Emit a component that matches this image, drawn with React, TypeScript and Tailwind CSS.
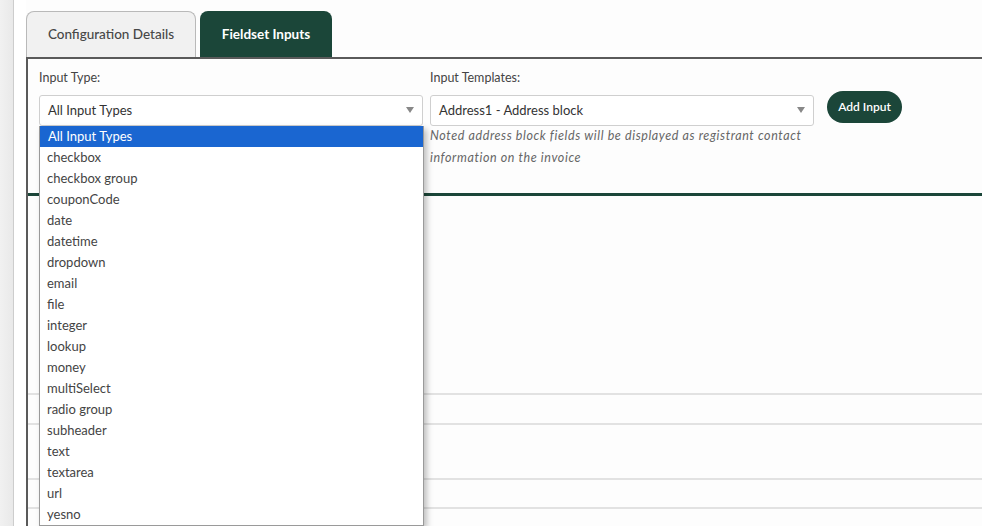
const inputTypes = [
  'All Input Types',
  'checkbox',
  'checkbox group',
  'couponCode',
  'date',
  'datetime',
  'dropdown',
  'email',
  'file',
  'integer',
  'lookup',
  'money',
  'multiSelect',
  'radio group',
  'subheader',
  'text',
  'textarea',
  'url',
  'yesno',
]

function Caret() {
  return (
    <svg width="8" height="6" viewBox="0 0 8 6" className="shrink-0">
      <path d="M0 0 L8 0 L4 6 Z" fill="#888" />
    </svg>
  )
}

function SelectBox({ value }: { value: string }) {
  return (
    <div className="flex h-[31px] w-[384px] items-center justify-between rounded-[3px] border border-[#cfcfcf] bg-white pl-[8px] pr-[8px] text-[13px] text-[#333]">
      <span>{value}</span>
      <Caret />
    </div>
  )
}

export default function App() {
  return (
    <div
      className="flex h-[526px] w-[982px] overflow-hidden bg-[#fdfdfd]"
      style={{ fontFamily: 'Lato, "Open Sans", sans-serif' }}
    >
      {/* left rail */}
      <div className="w-[14px] shrink-0 border-r border-[#cdcdcd] bg-gradient-to-r from-[#f1f1f1] to-[#e9e9e9]" />
      <div className="w-[12px] shrink-0 bg-white" />

      <div className="flex min-w-0 flex-1 flex-col pt-[11px]">
        {/* tabs */}
        <div className="flex h-[46px] items-end gap-[4px]">
          <div className="flex h-[46px] w-[170px] items-center justify-center rounded-t-[8px] border border-b-0 border-[#b9b9b9] bg-[#f1f1f1] text-[13.5px] font-medium text-[#474747]">
            Configuration Details
          </div>
          <div className="flex h-[46px] w-[132px] items-center justify-center rounded-t-[8px] bg-[#1b4639] text-[13.5px] font-bold text-white">
            Fieldset Inputs
          </div>
        </div>

        {/* panel */}
        <div className="flex flex-1 flex-col border-l-2 border-t-2 border-[#5a5a5a] bg-[#fdfdfd]">
          <div className="flex items-start pl-[11px] pt-[10px] pb-[24px]">
            <div className="relative z-10 flex flex-col">
              <span className="mb-[7px] text-[12.5px] text-[#444]">Input Type:</span>
              <SelectBox value="All Input Types" />
              <ul className="absolute left-0 top-full w-[385px] border border-t-0 border-[#9a9a9a] bg-white shadow-[3px_3px_6px_rgba(0,0,0,0.25)]">
                {inputTypes.map((t, i) => (
                  <li
                    key={t}
                    className={
                      i === 0
                        ? 'flex h-[21px] items-center bg-[#1a66d1] pl-[8px] text-[13px] text-white'
                        : 'flex h-[21px] items-center pl-[7px] text-[13px] text-[#444]'
                    }
                  >
                    {t}
                  </li>
                ))}
              </ul>
            </div>

            <div className="ml-[7px] flex flex-col">
              <span className="mb-[7px] text-[12.5px] text-[#444]">Input Templates:</span>
              <SelectBox value="Address1 - Address block" />
              <p className="mt-[-1px] w-[384px] text-[12.5px] italic leading-[22px] tracking-[0.6px] text-[#666]">
                Noted address block fields will be displayed as registrant contact information on the invoice
              </p>
            </div>

            <button
              type="button"
              className="ml-[13px] mt-[22px] h-[32px] w-[75px] rounded-full bg-[#1b4639] text-[12px] font-semibold text-white"
            >
              Add Input
            </button>
          </div>

          <div className="h-[3px] bg-[#1b4639]" />

          {/* table body */}
          <div className="flex flex-col">
            <div className="h-[197px]" />
            <div className="h-[30px] border-t-2 border-[#e2e2e2]" />
            <div className="h-[55px] border-t-2 border-[#e2e2e2]" />
            <div className="h-[29px] border-t-2 border-[#e2e2e2]" />
            <div className="h-[30px] border-t-2 border-[#e2e2e2]" />
          </div>
        </div>
      </div>
    </div>
  )
}
